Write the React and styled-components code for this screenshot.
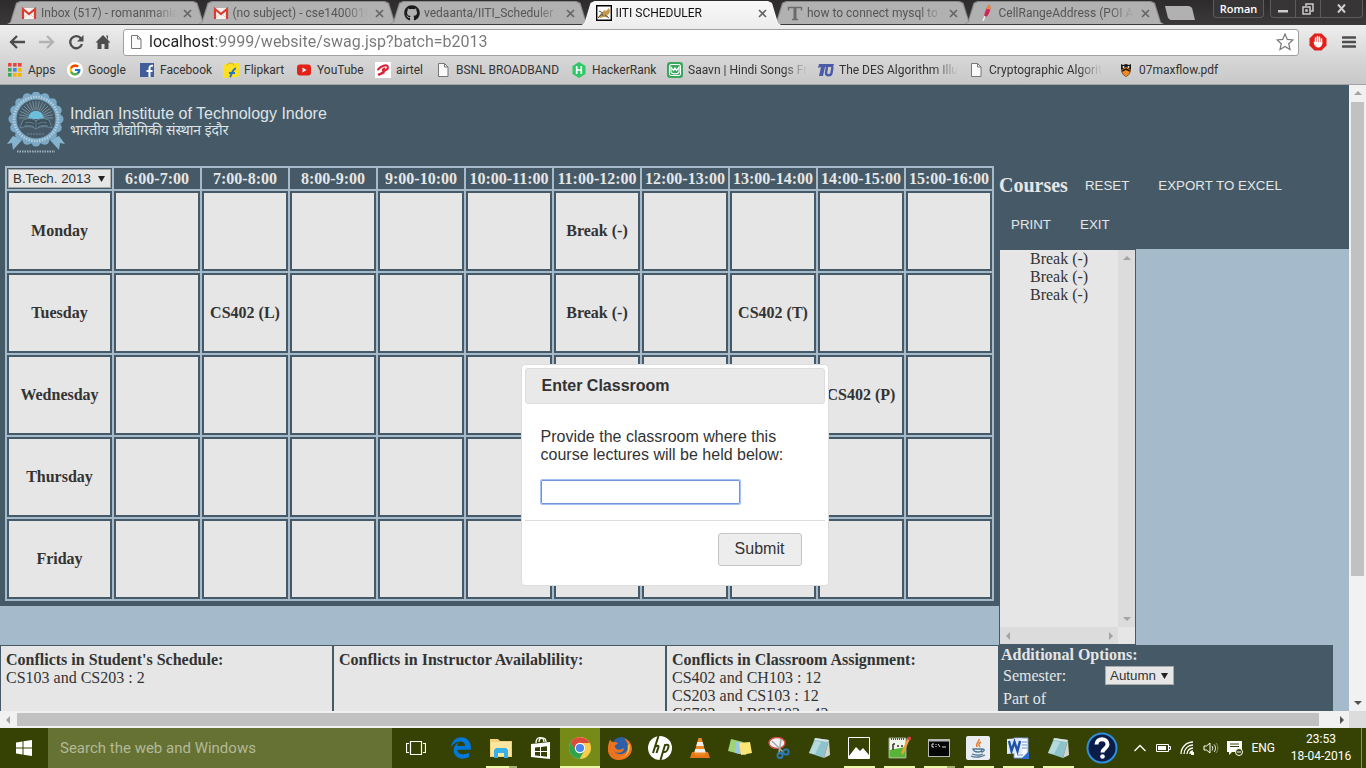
import React from "react";
import styled, { createGlobalStyle } from "styled-components";
import { FcGoogle } from "react-icons/fc";
import { FaGithub, FaEdgeLegacy } from "react-icons/fa6";

const DARK = "#455a66";
const LIGHT = "#a5bbcc";
const PAPER = "#e6e6e6";
const UI = 'Roboto, "Open Sans", sans-serif';
const SANS = '"Liberation Sans", Arial, sans-serif';
const SERIF = '"Liberation Serif", "Times New Roman", serif';

const GlobalStyle = createGlobalStyle`
  *, *::before, *::after { box-sizing: border-box; }
  body { margin: 0; overflow: hidden; }
  svg { display: block; flex: none; }
  button { cursor: pointer; }
`;

const Desktop = styled.div`
  display: flex;
  flex-direction: column;
  height: 100vh;
  overflow: hidden;
  font-family: ${UI};
`;

/* ---------- browser chrome ---------- */

const TabStrip = styled.div`
  display: flex;
  height: 25px;
  padding-left: 7px;
  background: linear-gradient(#2e2b2c, #3b3939);
`;

const TabList = styled.div`
  display: flex;
  flex: 0 1 1149px;
  min-width: 0;
`;

const Tab = styled.div`
  position: relative;
  z-index: ${(p) => (p.$active ? 2 : 1)};
  display: flex;
  align-items: center;
  gap: 4px;
  flex: 1 1 0;
  min-width: 0;
  margin-right: -8px;
  padding: 1px 12px 0 14px;
  &::before,
  &::after {
    content: "";
    position: absolute;
    z-index: -1;
    clip-path: polygon(0 100%, 3px 92%, 9px 8%, 13px 0, calc(100% - 13px) 0, calc(100% - 9px) 8%, calc(100% - 3px) 92%, 100% 100%);
  }
  &::before {
    inset: 1px 0 ${(p) => (p.$active ? 0 : 1)}px;
    background: ${(p) => (p.$active ? "#f8f8f8" : "#8a8a8a")};
  }
  &::after {
    inset: 2px 1px ${(p) => (p.$active ? 0 : 1)}px;
    background: ${(p) => (p.$active ? "linear-gradient(#f8f8f8, #eeeeee)" : "#b1b1b1")};
  }
`;

const TabLabel = styled.span`
  flex: 1;
  min-width: 0;
  white-space: nowrap;
  font-size: 12px;
  line-height: 20px;
  color: ${(p) => (p.$active ? "#111" : "#555")};
  mask-image: linear-gradient(to right, #000 calc(100% - 24px), transparent);
`;

const TabClose = styled.button`
  display: grid;
  place-items: center;
  width: 14px;
  height: 14px;
  padding: 0;
  border: 0;
  background: none;
  color: #666;
`;

const NewTab = styled.button`
  width: 30px;
  height: 14px;
  margin: 6px 0 0 9px;
  padding: 0;
  border: 0;
  background: #b1b1b1;
  clip-path: polygon(0 0, 80% 0, 90% 12%, 100% 100%, 18% 100%, 10% 85%);
`;

const WindowControls = styled.div`
  display: flex;
  height: 18px;
  margin-left: auto;
  margin-right: 3px;
`;

const WindowButton = styled.button`
  display: grid;
  place-items: center;
  width: ${(p) => p.$width}px;
  padding: 0;
  border: 1px solid #5d5b5c;
  border-width: 0 1px 1px ${(p) => (p.$first ? 1 : 0)}px;
  border-radius: ${(p) => (p.$first ? "0 0 0 4px" : p.$last ? "0 0 4px 0" : "0")};
  background: #373536;
  color: #ccc;
`;

const ProfileButton = styled(WindowButton)`
  margin-right: 6px;
  border-radius: 0 0 4px 4px;
  color: #fff;
  font: 600 11px/16px "Open Sans", sans-serif;
`;

const Toolbar = styled.div`
  display: flex;
  align-items: center;
  height: 34px;
  padding: 0 2px 0 8px;
  background: linear-gradient(#eeeeee, #d6d6d6);
`;

const ToolButton = styled.button`
  display: grid;
  place-items: center;
  width: ${(p) => p.$width || 29}px;
  height: 26px;
  padding: 0;
  border: 0;
  background: none;
  color: #4d4d4d;
`;

const Omnibox = styled.label`
  display: flex;
  align-items: center;
  gap: 5px;
  flex: 1;
  height: 27px;
  margin-right: 3px;
  padding: 0 4px;
  border: 1px solid #a0a0a0;
  border-radius: 3px;
  background: #fff;
`;

const UrlInput = styled.input`
  flex: 1;
  min-width: 0;
  padding: 0;
  border: 0;
  outline: 0;
  font: 16px/22px ${UI};
  color: transparent;
  background: linear-gradient(to right, #222 64px, #777 64px);
  -webkit-background-clip: text;
  background-clip: text;
`;

const BookmarkBar = styled.nav`
  display: flex;
  align-items: center;
  height: 26px;
  padding: 0 7px 3px;
  border-bottom: 1px solid #a3a3a3;
  background: linear-gradient(#d6d6d6, #c8c8c8);
`;

const Bookmark = styled.a`
  display: flex;
  align-items: center;
  gap: 5px;
  flex: 0 1 ${(p) => p.$width}px;
  min-width: 0;
  color: #333;
  font-size: 12px;
  line-height: 16px;
  text-decoration: none;
  white-space: nowrap;
`;

const BookmarkLabel = styled.span`
  mask-image: ${(p) => (p.$fade ? "linear-gradient(to right, #000 calc(100% - 24px), transparent)" : "none")};
`;

/* ---------- scrollbars ---------- */

const Scrollbar = styled.div`
  display: flex;
  flex-direction: ${(p) => (p.$vertical ? "column" : "row")};
  background: ${(p) => (p.$disabled ? "#dcdcdc" : "#f1f1f1")};
  ${(p) => (p.$vertical ? "width: 17px;" : "height: 17px;")}
`;

const ScrollArrow = styled.span`
  display: grid;
  place-items: center;
  flex: none;
  width: 17px;
  height: 17px;
  color: ${(p) => (p.$on ? "#505050" : "#a3a3a3")};
`;

const ScrollTrack = styled.div`
  flex: 1;
  padding: ${(p) => (p.$vertical ? "0 2px" : "2px 0")};
`;

const ScrollThumb = styled.div`
  width: ${(p) => (p.$vertical ? "100%" : "99%")};
  height: ${(p) => (p.$vertical ? "80%" : "100%")};
  background: #c1c1c1;
`;

/* ---------- scheduler page ---------- */

const ViewArea = styled.div`
  display: grid;
  grid-template: minmax(0, 1fr) 17px / minmax(0, 1fr) 17px;
  flex: 1;
  min-height: 0;
`;

const Corner = styled.div`
  background: #dcdcdc;
`;

const Page = styled.main`
  position: relative;
  display: grid;
  grid-template-columns: 999fr 334fr 16px;
  align-items: start;
  overflow: hidden;
  background: ${LIGHT};
  color: #333;
  font: 16px/18px ${SERIF};
`;

const ScheduleColumn = styled.div`
  min-width: 0;
`;

const SideColumn = styled.div`
  grid-column: 2 / 4;
  min-width: 0;
`;

const Banner = styled.header`
  display: flex;
  gap: 5px;
  height: 81px;
  padding: 7px;
  background: ${DARK};
`;

const BannerText = styled.div`
  padding-top: 13px;
  color: #dfe3e6;
  font-family: ${SANS};
  font-size: 16px;
  line-height: 18px;
  white-space: nowrap;
`;

const HindiName = styled.div`
  font-family: "Noto Sans Devanagari", "Noto Sans", "Lohit Devanagari", sans-serif;
  font-size: 14px;
  line-height: 18px;
`;

const TimetableWrap = styled.div`
  padding: 0 5px 5px;
  background: ${DARK};
`;

const Timetable = styled.table`
  width: 100%;
  table-layout: fixed;
  border-collapse: separate;
  border-spacing: 2px;
  background: ${LIGHT};
`;

const HourHeader = styled.th`
  width: ${(p) => p.$width || "auto"};
  height: 21px;
  padding: 0;
  background: ${DARK};
  color: ${PAPER};
  white-space: nowrap;
`;

const DayHeader = styled.th`
  height: 80px;
  padding: 0;
  border: 2px solid ${DARK};
  background: ${PAPER};
`;

const Slot = styled.td`
  padding: 0;
  border: 2px solid ${DARK};
  background: ${PAPER};
  font-weight: bold;
  text-align: center;
  white-space: nowrap;
`;

const SelectBox = styled.span`
  position: relative;
  display: block;
  width: ${(p) => p.$width};
  margin: ${(p) => (p.$center ? "0 auto" : 0)};
  svg {
    position: absolute;
    top: 7px;
    right: 6px;
    pointer-events: none;
  }
`;

const Select = styled.select`
  display: block;
  appearance: none;
  width: 100%;
  height: 19px;
  padding: 0 4px;
  border: 1px solid #a9a9a9;
  border-radius: 0;
  background: ${PAPER};
  color: #333;
  font-family: ${SANS};
`;

const Conflicts = styled.section`
  display: grid;
  grid-template-columns: repeat(3, 1fr);
  margin-top: 39px;
`;

const ConflictPanel = styled.div`
  min-height: 140px;
  padding: 5px;
  border: 1px solid ${DARK};
  background: ${PAPER};
`;

const PanelTitle = styled.h4`
  margin: 0;
  font-size: 16px;
  line-height: 18px;
`;

const ConflictLine = styled.div``;

const CourseBar = styled.div`
  display: flex;
  flex-wrap: wrap;
  align-items: center;
  gap: 3px 5px;
  padding: 82px 0 7px;
  background: ${DARK};
`;

const CourseTitle = styled.h3`
  margin: 0;
  color: ${PAPER};
  font-size: 20px;
  line-height: 22px;
`;

const FlatButton = styled.button`
  height: 36px;
  padding: 0 12px;
  border: 0;
  background: none;
  color: ${PAPER};
  font-family: ${SANS};
  text-transform: uppercase;
`;

const CourseBox = styled.div`
  display: grid;
  grid-template: minmax(0, 1fr) 17px / minmax(0, 1fr) 17px;
  width: 137px;
  height: 396px;
  border: 1px solid ${DARK};
  background: ${PAPER};
`;

const CourseList = styled.ul`
  margin: 0;
  padding: 0 0 0 30px;
  list-style: none;
`;

const Options = styled.section`
  margin-right: 16px;
  min-height: 120px;
  padding: 1px 2px;
  background: ${DARK};
  color: ${PAPER};
`;

const OptionRow = styled.div`
  display: grid;
  grid-template-columns: 102px 1fr;
  align-items: center;
  min-height: 23px;
  padding-left: 2px;
`;

/* ---------- dialog ---------- */

const Dialog = styled.form`
  position: absolute;
  top: 279px;
  left: 50%;
  width: 308px;
  height: 222px;
  padding: 3px;
  transform: translateX(-50%);
  border: 1px solid #ddd;
  border-radius: 4px;
  background: #fff;
  color: #333;
  font: 16px/18px ${SANS};
`;

const DialogTitle = styled.h2`
  margin: 0;
  padding: 8px 16px;
  border: 1px solid #ddd;
  border-radius: 3px;
  background: #e9e9e9;
  font-size: 16px;
  line-height: 18px;
`;

const DialogBody = styled.div`
  height: 116px;
  padding: 24px 16px 0;
`;

const DialogLabel = styled.label`
  display: block;
  margin-bottom: 16px;
`;

const DialogInput = styled.input`
  display: block;
  width: 199px;
  height: 24px;
  border: 1px solid #6f96d8;
  border-radius: 1px;
  outline: 1px solid #a3c3f7;
`;

const DialogFooter = styled.div`
  display: flex;
  justify-content: flex-end;
  padding: 12px 23px;
  border-top: 1px solid #ddd;
`;

const SubmitButton = styled.button`
  width: 84px;
  height: 33px;
  padding: 0 0 2px;
  border: 1px solid #c5c5c5;
  border-radius: 3px;
  background: #ededed;
  color: #333;
  font: 16px/18px ${SANS};
`;

/* ---------- taskbar ---------- */

const Taskbar = styled.footer`
  display: flex;
  height: 40px;
  background: #364203;
  color: #fff;
`;

const StartButton = styled.button`
  display: grid;
  place-items: center;
  width: 48px;
  padding: 0;
  border: 0;
  background: none;
`;

const SearchInput = styled.input`
  flex: 0 1 344px;
  min-width: 0;
  padding: 0 12px;
  border: 0;
  background: #667233;
  color: #fff;
  font: 15px/20px ${UI};
  &::placeholder {
    color: #b3b999;
    opacity: 1;
  }
`;

const AppRow = styled.div`
  display: flex;
  flex: 0 1 637px;
  margin-left: 1px;
`;

const AppButton = styled.button`
  display: grid;
  place-items: center;
  flex: 1;
  position: relative;
  padding: 0;
  border: 0;
  background: ${(p) => (p.$active ? "#768a18" : "none")};
  &::after {
    content: "";
    position: absolute;
    bottom: 0;
    left: ${(p) => (p.$active ? 0 : 5)}px;
    right: ${(p) => (p.$active ? 0 : 4)}px;
    height: 2px;
    background: ${(p) => (p.$stacked ? "linear-gradient(to right, #e9f8a6 74%, #a7b374 74%)" : "#e9f8a6")};
    opacity: ${(p) => (p.$running ? 1 : 0)};
  }
`;

const Tray = styled.div`
  display: flex;
  align-items: center;
  gap: 8px;
  margin-left: auto;
  font-size: 12px;
  line-height: 17px;
`;

const Clock = styled.time`
  width: 64px;
  margin-left: 6px;
  text-align: center;
  white-space: nowrap;
`;

const ShowDesktop = styled.button`
  width: 5px;
  height: 40px;
  padding: 0;
  border: 0;
  border-left: 1px solid #8a9168;
  background: none;
`;

/* ---------- drawings ---------- */

const Icon = ({ s = 16, h, box = 16, children }) => (
  <svg width={s} height={h || s} viewBox={`0 0 ${box} ${box}`} fill="none" aria-hidden="true">
    {children}
  </svg>
);

const Cross = () => (
  <Icon s={9} box={9}><path d="M1 1l7 7M8 1l-7 7" stroke="currentColor" strokeWidth="1.7" /></Icon>
);

const Gmail = () => (
  <Icon>
    <path d="M1 3h14v11H1z" fill="#f4f1ef" />
    <path d="M2 14V4l6 5 6-5v10" stroke="#d93e32" strokeWidth="2.200" />
    <path d="M4 12l3-3M12 12L9 9" stroke="#d8d0cc" />
  </Icon>
);

const CatFav = () => (
  <Icon>
    <path d="M.7.7h14.600v14.600H.7z" fill="#fff" stroke="#000" strokeWidth="1.400" />
    <path d="M2 12l3-4 2-1 1-2 2 1 3-3 1 3-1 3-2 1 2 3-3-1-3 0-2 1z" fill="#c49a4a" />
    <path d="M2 13l4-4 1 2M3 6l4 2M9 10l4 3" stroke="#555" />
  </Icon>
);

const LetterT = () => (
  <Icon>
    <path d="M1.500 5.500v-3h13v3M5 14.500h6" stroke="#6b6b6b" strokeWidth="1.400" />
    <path d="M8 2v12" stroke="#6b6b6b" strokeWidth="3" />
  </Icon>
);

const Feather = () => (
  <Icon>
    <path d="M10 0c2 1 1.500 4 .5 7C9.500 10 8 12 5 13c0-4 2-10 5-13z" fill="#cf2554" />
    <path d="M10 0c2 1 1.500 3 1 4.500L7.500 4C8 2.500 9 1 10 0z" fill="#f0862d" />
    <path d="M6 11l-2 5" stroke="#eee" strokeWidth="1.500" />
  </Icon>
);

const PageIcon = ({ h = 16 }) => (
  <Icon h={h}>
    <path d="M3.500 1.500h6l3.500 3.500v9.500H3.500z" fill="#fafafa" stroke="#777" />
    <path d="M9.500 1.500V5H13" stroke="#777" />
  </Icon>
);

const AppsGrid = () => (
  <Icon>
    {["#e8453c", "#e8453c", "#e8453c", "#3aa757", "#4285f4", "#f4b400", "#3aa757", "#f4b400", "#f4b400"].map((c, i) => (
      <rect key={i} x={1 + (i % 3) * 5} y={1 + Math.floor(i / 3) * 5} width="3.600" height="3.600" fill={c} />
    ))}
  </Icon>
);

const GoogleRound = () => (
  <Icon>
    <circle cx="8" cy="8" r="8" fill="#fff" />
    <FcGoogle x="1.500" y="1.500" size={13} />
  </Icon>
);

const Facebook = () => (
  <Icon>
    <rect x="1" y="1" width="14" height="14" fill="#415e9b" />
    <path d="M10.500 15V6.500c0-2 1-3 3.500-2.700M7.500 9h6" stroke="#fff" strokeWidth="2" />
  </Icon>
);

const Flipkart = () => (
  <Icon>
    <path d="M0 3l4-1 12-1v13l-2 1L0 16z" fill="#fde021" />
    <path d="M4 3c1-2.500 6-2.500 7 0" stroke="#cda80c" />
    <path d="M7 15c2-2 2-8 6-8.500M6 11h6" stroke="#2a74c8" strokeWidth="2" />
  </Icon>
);

const YouTube = () => (
  <Icon>
    <rect x="1" y="2.500" width="14" height="11" rx="3" fill="#e32119" />
    <path d="M6.500 5.500v5l4-2.500z" fill="#fff" />
  </Icon>
);

const Airtel = () => (
  <Icon>
    <rect width="16" height="16" fill="#fff" />
    <path d="M3 7.500C6 4 11.500 2 12.800 4.500c1 2.500-3 4.500-4.300 4.500C7 9 8 7 9.500 6.500" stroke="#dc1f33" strokeWidth="2" strokeLinecap="round" />
    <path d="M4 12.500c2-.3 2.500-1.500 4.500-2" stroke="#dc1f33" strokeWidth="2.500" strokeLinecap="round" />
  </Icon>
);

const HackerRank = () => (
  <Icon>
    <path d="M8 0l6.500 4v8L8 16l-6.500-4V4z" fill="#2ec866" />
    <path d="M5.700 4v8M10.300 4v8M5.700 8h4.600" stroke="#fff" strokeWidth="1.700" />
  </Icon>
);

const Saavn = () => (
  <Icon>
    <rect width="16" height="16" rx="3" fill="#3ba660" />
    <rect x="2.500" y="2.500" width="11" height="11" rx="1.500" stroke="#fff" />
    <path d="M4 5v5c1 2.500 7 2.500 8 0V5L9.500 8.500 8 6 6.500 8.500z" stroke="#fff" strokeWidth="1.200" />
  </Icon>
);

const DesIcon = () => (
  <Icon>
    <path d="M0 6l1-4h15l-1 3H7L5 14H1l2-9z" fill="#4b5ba8" />
    <path d="M9 5L8 11c0 3 5 3 5.500 0L14.500 5" stroke="#4b5ba8" strokeWidth="2.400" />
  </Icon>
);

const Shield = () => (
  <Icon>
    <path d="M3 2l2 1 3-1 3 1 2-1v5c0 4-2 6-5 8-3-2-5-4-5-8z" fill="#161616" />
    <path d="M3 8l5-3 5 3-2 4-3 3-3-3z" fill="#f08a20" />
    <path d="M4 9l4-2 4 2" stroke="#161616" strokeWidth="1.500" />
    <circle cx="5.500" cy="5" r="1" fill="#eee" /><circle cx="10.500" cy="5" r="1" fill="#eee" />
  </Icon>
);

const Triangle = ({ dir }) => {
  const d = { up: "M0 5l4-4 4 4z", down: "M0 2l4 4 4-4z", left: "M5 0L1 4l4 4z", right: "M3 0l4 4-4 4z" }[dir];
  return <Icon s={8} box={8}><path d={d} fill="currentColor" /></Icon>;
};

const SelectArrow = () => (
  <svg width="7" height="6" viewBox="0 0 7 6" aria-hidden="true"><path d="M0 0h7L3.500 6z" fill="#222" /></svg>
);

const teeth = Array.from({ length: 16 }, (_, i) => {
  const a = (i * Math.PI) / 8;
  return <circle key={i} cx={29 + 23 * Math.cos(a)} cy={27 + 23 * Math.sin(a)} r="4.500" fill="#7ba9c6" />;
});

const rays = Array.from({ length: 17 }, (_, i) => {
  const a = Math.PI + (i * Math.PI) / 16;
  return (
    <path
      key={i}
      d={`M${29 + 8 * Math.cos(a)} ${26 + 8 * Math.sin(a)}L${29 + 17 * Math.cos(a)} ${26 + 17 * Math.sin(a)}`}
      stroke="#8fa5b1"
      strokeWidth=".7"
    />
  );
});

const Crest = () => (
  <svg width="58" height="62" viewBox="0 0 58 62" fill="none" role="img" aria-label="Institute crest">
    <path d="M6 44L0 52l5-1 1 7 9-10zM52 44l6 8-5-1-1 7-9-10z" fill="#86b3ce" />
    {teeth}
    <circle cx="29" cy="27" r="25" fill="#7ba9c6" />
    <circle cx="29" cy="27" r="22" stroke="#b4cedd" strokeWidth="2.500" strokeDasharray="1.500 1.200" />
    <circle cx="29" cy="27" r="19.500" fill={DARK} />
    {rays}
    <path d="M21 27c1-11 15-11 16 0z" fill="#6cc0dc" />
    <path d="M16 28c5-2 10-2 13 1 3-3 8-3 13-1l3 8c-6-2-12-2-16 1-4-3-10-3-16-1z" fill="#3d505b" stroke="#7292a5" strokeWidth=".8" />
    <path d="M29 29v8M18 31c4-1 7-1 9 1M17 34c4-1 7-1 10 1M31 32c3-2 6-2 9-1M31 35c3-2 7-2 10-1" stroke="#7292a5" strokeWidth=".7" />
    <path d="M20 42h18" stroke="#6d8a9a" strokeDasharray="2 1" />
    <path d="M10 59.500h38" stroke="#9fb1bc" strokeWidth="2" strokeDasharray="1.500 1" />
  </svg>
);

const Chrome = () => (
  <Icon s={22} box={22}>
    <circle cx="11" cy="11" r="11" fill="#f7ce48" />
    <path d="M1.500 5.500A11 11 0 0 1 20.600 6H11L6 13z" fill="#dc4a3d" />
    <path d="M1.500 5.500A11 11 0 0 0 10.500 22l5-8.500H7z" fill="#30a350" />
    <circle cx="11" cy="11" r="5.200" fill="#fff" />
    <circle cx="11" cy="11" r="4.100" fill="#4a86ee" />
  </Icon>
);

const Explorer = () => (
  <Icon s={22} box={22}>
    <path d="M0 2h8l2 2h12v16H0z" fill="#f3d27a" />
    <path d="M1 5h20v14H1z" fill="#fbe6a0" />
    <path d="M4 21v-8l2-2h10l2 2v8h-4v-5H8v5z" fill="#35b0e8" />
  </Icon>
);

const Store = () => (
  <Icon s={24} box={24}>
    <path d="M2 8l19-2v17L2 21z" fill="#fff" />
    <path d="M7 7c0-7 8-7 8-1M10 6c0-6 7-5 7 0" stroke="#fff" strokeWidth="1.300" />
    <path d="M6 11.500l5-.5v4H6zM12 11l6-.7V15h-6zM6 16h5v4l-5-.5zM12 16h6v4.700l-6-.6z" fill="#364203" />
  </Icon>
);

const Firefox = () => (
  <Icon s={24} box={22}>
    <circle cx="12" cy="9.500" r="8.500" fill="#2c5fa5" />
    <path d="M2 3c0 2 2 2 3 3 2-1 4 0 4 1-1 1-4 1-2 4 2 3 6 1 8 0-1 5-7 6-10 2 3 5 11 5 13-1 1-4-1-7-3-10 5 2 7 6 7 10-1 12-20 14-22 2C-.5 9 1 5 2 3z" fill="#ea7320" />
    <path d="M20 7c1 9-4 13-10 13 6 0 9-5 8-11z" fill="#f9bd3c" />
  </Icon>
);

const Hp = () => (
  <Icon s={24} box={24}>
    <circle cx="12" cy="12" r="12" fill="#fff" />
    <path d="M10.500 0L5 17M7 10.500c3.500-1.500 4-.5 3.200 1.500L8.500 17M12.500 24l4.500-15c4-1 4 .5 3 3.500s-2 4-5 3.500" stroke="#364203" strokeWidth="2" />
  </Icon>
);

const Vlc = () => (
  <Icon s={22} box={22}>
    <path d="M3 15h16l2 6H1z" fill="#e77616" />
    <path d="M9.500 1h3L17 17c-2 2-10 2-12 0z" fill="#f08a24" />
    <path d="M8.300 5h5.400l1 4H7.300zM6.300 12h9.400l1 3.500H5.300z" fill="#eee" />
  </Icon>
);

const Notes = () => (
  <Icon s={24} box={24}>
    <path d="M3 3l12 3-3 12L0 15z" fill="#9ed477" />
    <path d="M8 6l11 1-1 12L7 17z" fill="#9cc6e6" />
    <path d="M11 7l11-1 2 11-11 2z" fill="#fbe574" />
  </Icon>
);

const Snip = () => (
  <Icon s={22} box={22}>
    <ellipse cx="9" cy="6" rx="8" ry="5.500" fill="#f2f2f2" stroke="#d14a46" strokeWidth="1.400" />
    <path d="M4 4l11 11M13 2l-2 14" stroke="#a6adb3" strokeWidth="1.600" />
    <circle cx="18" cy="15" r="2.700" stroke="#2e7cc0" strokeWidth="1.800" />
    <circle cx="12" cy="18.500" r="2.500" stroke="#2e7cc0" strokeWidth="1.800" />
  </Icon>
);

const Notepad = () => (
  <Icon s={22} box={22}>
    <path d="M7 1l14 2-5 18-15-5z" fill="#8fc3cc" />
    <path d="M7 1l14 2-1 2L6.500 3z" fill="#d8e4e4" />
    <path d="M21 3l1 15-6 3z" fill="#d6d6cf" />
    <path d="M7 4l6 1-6 12-6-1z" fill="#b6dade" />
  </Icon>
);

const Photos = () => (
  <Icon s={22} box={22}>
    <path d="M.5.5h21v21H.5z" stroke="#fff" />
    <path d="M1 19l7-9 4 4 3-3 6 7v3H1z" fill="#fff" />
  </Icon>
);

const NotepadPlus = () => (
  <Icon s={24} box={24}>
    <path d="M2 2h17v20H2z" fill="#f2f5ea" stroke="#96a187" />
    <path d="M2.500 14l16-3v10.500h-16z" fill="#58b434" />
    <path d="M4 3h14" stroke="#555" strokeWidth="2" strokeDasharray="1 1" />
    <path d="M6 14V8M6 8h2M10 10h2M14 10h2" stroke="#333" strokeWidth="1.500" />
    <path d="M22 2L15 18" stroke="#e7a33c" strokeWidth="2.500" />
    <path d="M23 1l-1 3" stroke="#d44" strokeWidth="3" />
  </Icon>
);

const Cmd = () => (
  <Icon s={22} box={22}>
    <path d="M0 2h22v18H0z" fill="#b7bab7" />
    <path d="M1 4.500h20V19H1z" fill="#050505" />
    <path d="M6 7H4v3h2M8 7v1M8 9v1M10 7l2 3M14 10h4" stroke="#ddd" />
  </Icon>
);

const Java = () => (
  <Icon s={24} box={24}>
    <rect width="24" height="24" rx="2" fill="#e9edf1" />
    <path d="M13 3c1 3-4 4-2 8M15 6c-2 1-3 3-1 5" stroke="#ea7b28" strokeWidth="1.500" />
    <path d="M7 13h9c0 4-8 4-9 0zM16 13c4 0 2 3-1 3M6 18c4 1.500 8 1.500 11 0M5 20c4 2 11 1 14-1" stroke="#4c7796" strokeWidth="1.300" />
  </Icon>
);

const Word = () => (
  <Icon s={22} box={22}>
    <path d="M7 1h14v20H7z" fill="#f5f8fd" stroke="#7d9bd3" />
    <path d="M15 5h5M15 8h5M15 11h5M10 18h6" stroke="#6f92d4" />
    <path d="M0 2l15-1v15L0 17z" fill="#dfe9f8" />
    <path d="M2 4l2.500 10L7.500 5l3 9L13 4" stroke="#1d52a5" strokeWidth="2.400" />
    <path d="M14 22l8-8v8z" fill="#2f6fd0" />
  </Icon>
);

const Help = () => (
  <Icon s={32} box={32}>
    <circle cx="16" cy="16" r="14.500" fill="#0b1c48" stroke="#2f8fd8" strokeWidth="2" />
    <path d="M10.500 12.500c0-7 11-7 11 0 0 4-5 4-5 8" stroke="#fff" strokeWidth="4" />
    <circle cx="16.500" cy="24.500" r="2.300" fill="#fff" />
  </Icon>
);

const Windows = () => (
  <Icon s={16} box={16}>
    <path d="M0 2.500l6.500-1v6H0zM7.500 1.300L16 0v7.500H7.500zM0 8.500h6.500v6L0 13.600zM7.500 8.500H16V16l-8.500-1.300z" fill="#fff" />
  </Icon>
);

const TaskView = () => (
  <Icon s={20} box={20}>
    <path d="M4.500 3.500h11v13h-11zM3 5.500H.5v9H3M17 5.500h2.500v9H17" stroke="#fff" strokeWidth="1.200" />
  </Icon>
);

/* ---------- data ---------- */

const TABS = [
  { label: "Inbox (517) - romanmania", icon: <Gmail /> },
  { label: "(no subject) - cse1400010", icon: <Gmail /> },
  { label: "vedaanta/IITI_Scheduler", icon: <FaGithub size={16} color="#1b1b1b" /> },
  { label: "IITI SCHEDULER", icon: <CatFav />, active: true },
  { label: "how to connect mysql to e", icon: <LetterT /> },
  { label: "CellRangeAddress (POI AP", icon: <Feather /> },
];

const BOOKMARKS = [
  ["Apps", 60, <AppsGrid />],
  ["Google", 72, <GoogleRound />],
  ["Facebook", 84, <Facebook />],
  ["Flipkart", 73, <Flipkart />],
  ["YouTube", 79, <YouTube />],
  ["airtel", 60, <Airtel />],
  ["BSNL BROADBAND", 136, <PageIcon />],
  ["HackerRank", 96, <HackerRank />],
  ["Saavn | Hindi Songs Fr", 151, <Saavn />, true],
  ["The DES Algorithm Illu", 150, <DesIcon />, true],
  ["Cryptographic Algorit", 150, <PageIcon />, true],
  ["07maxflow.pdf", 120, <Shield />],
];

const HOURS = [6, 7, 8, 9, 10, 11, 12, 13, 14, 15].map((h) => `${h}:00-${h + 1}:00`);

const DAYS = [
  ["Monday", { 5: "Break (-)" }],
  ["Tuesday", { 1: "CS402 (L)", 5: "Break (-)", 7: "CS402 (T)" }],
  ["Wednesday", { 8: "CS402 (P)" }],
  ["Thursday", {}],
  ["Friday", {}],
];

const CONFLICTS = [
  ["Conflicts in Student's Schedule:", ["CS103 and CS203 : 2"]],
  ["Conflicts in Instructor Availablility:", []],
  ["Conflicts in Classroom Assignment:", ["CS402 and CH103 : 12", "CS203 and CS103 : 12", "CS703 and BSE102 : 42"]],
];

const APPS = [
  ["Edge", <FaEdgeLegacy size={22} color="#0078d7" />],
  ["File Explorer", <Explorer />, "stacked"],
  ["Store", <Store />],
  ["Chrome", <Chrome />, "active"],
  ["Firefox", <Firefox />],
  ["HP", <Hp />],
  ["VLC", <Vlc />],
  ["Sticky Notes", <Notes />],
  ["Snipping Tool", <Snip />],
  ["Notepad", <Notepad />],
  ["Photos", <Photos />, "running"],
  ["Notepad++", <NotepadPlus />, "running"],
  ["Command Prompt", <Cmd />, "stacked"],
  ["Java", <Java />, "running"],
  ["Word", <Word />, "running"],
  ["Notepad document", <Notepad />, "running"],
];

/* ---------- sections ---------- */

const BrowserHeader = () => (
  <header>
    <TabStrip>
      <TabList>
        {TABS.map((t) => (
          <Tab key={t.label} $active={t.active}>
            {t.icon}
            <TabLabel $active={t.active}>{t.label}</TabLabel>
            <TabClose aria-label="Close tab"><Cross /></TabClose>
          </Tab>
        ))}
      </TabList>
      <NewTab aria-label="New tab" />
      <WindowControls>
        <ProfileButton $width={51} $first>Roman</ProfileButton>
        <WindowButton $width={26} $first aria-label="Minimize">
          <Icon s={12} box={12}><path d="M1 7h10v2.500H1z" fill="#ccc" /></Icon>
        </WindowButton>
        <WindowButton $width={25} aria-label="Restore">
          <Icon s={12} box={12}><path d="M4 3V1h7v7H9M1 4h7v7H1zM4 7h1v1H4z" stroke="#ccc" strokeWidth="1.500" /></Icon>
        </WindowButton>
        <WindowButton $width={42} $last aria-label="Close">
          <Icon s={11} box={11}><path d="M2 1.500l7 8M9 1.500l-7 8" stroke="#ccc" strokeWidth="2" /></Icon>
        </WindowButton>
      </WindowControls>
    </TabStrip>
    <Toolbar>
      <ToolButton $width={18} aria-label="Back">
        <Icon><path d="M16 8H3M8 2L2 8l6 6" stroke="currentColor" strokeWidth="2.300" /></Icon>
      </ToolButton>
      <ToolButton $width={42} aria-label="Forward">
        <Icon><path d="M0 8h13M8 2l6 6-6 6" stroke="#b3b3b3" strokeWidth="2.300" /></Icon>
      </ToolButton>
      <ToolButton $width={15} aria-label="Reload">
        <Icon><path d="M13 4.500A6 6 0 1 0 14 10" stroke="currentColor" strokeWidth="2.300" /><path d="M15.500 1v6.500H9z" fill="currentColor" /></Icon>
      </ToolButton>
      <ToolButton $width={40} aria-label="Home">
        <Icon><path d="M8 1l7.500 7.500h-2V15h-4v-5h-3v5h-4V8.500h-2zM11 1.500h2V6z" fill="currentColor" /></Icon>
      </ToolButton>
      <Omnibox>
        <PageIcon h={18} />
        <UrlInput aria-label="Address" defaultValue="localhost:9999/website/swag.jsp?batch=b2013" />
        <Icon s={18} box={18}>
          <path d="M9 1l2.300 5.400 5.700.5-4.300 3.800L14 16.500l-5-3-5 3 1.300-5.800L1 6.900l5.700-.5z" stroke="#777" strokeWidth="1.200" />
        </Icon>
      </Omnibox>
      <ToolButton $width={32} aria-label="Ad blocker">
        <Icon s={18} box={18}>
          <path d="M5.500.5h7l5 5v7l-5 5h-7l-5-5v-7z" fill="#e0201b" />
          <path d="M6.500 10V5M8.500 9V3.500M10.500 9V4M12.500 10V6M5.500 9.500c1 5 6 6 7.200.5z" stroke="#fff" strokeWidth="1.500" fill="#fff" strokeLinecap="round" />
        </Icon>
      </ToolButton>
      <ToolButton $width={30} aria-label="Menu">
        <Icon s={14} box={14}><path d="M1 2.500h12M1 7h12M1 11.500h12" stroke="currentColor" strokeWidth="2.600" strokeLinecap="round" /></Icon>
      </ToolButton>
    </Toolbar>
    <BookmarkBar aria-label="Bookmarks">
      {BOOKMARKS.map(([label, width, icon, fade]) => (
        <Bookmark key={label} href="#" $width={width}>
          {icon}
          <BookmarkLabel $fade={fade}>{label}</BookmarkLabel>
        </Bookmark>
      ))}
    </BookmarkBar>
  </header>
);

const ClassroomDialog = () => (
  <Dialog onSubmit={(e) => e.preventDefault()}>
    <DialogTitle>Enter Classroom</DialogTitle>
    <DialogBody>
      <DialogLabel htmlFor="classroom">Provide the classroom where this course lectures will be held below:</DialogLabel>
      <DialogInput id="classroom" type="text" />
    </DialogBody>
    <DialogFooter>
      <SubmitButton type="submit">Submit</SubmitButton>
    </DialogFooter>
  </Dialog>
);

const Scheduler = () => (
  <Page>
    <ScheduleColumn>
      <Banner>
        <Crest />
        <BannerText>
          Indian Institute of Technology Indore
          <HindiName lang="hi">भारतीय प्रौद्योगिकी संस्थान इंदौर</HindiName>
        </BannerText>
      </Banner>
      <TimetableWrap>
        <Timetable>
          <thead>
            <tr>
              <HourHeader $width="105px">
                <SelectBox $width="103px" $center>
                  <Select aria-label="Batch"><option>B.Tech. 2013</option></Select>
                  <SelectArrow />
                </SelectBox>
              </HourHeader>
              {HOURS.map((h) => <HourHeader key={h}>{h}</HourHeader>)}
            </tr>
          </thead>
          <tbody>
            {DAYS.map(([day, slots]) => (
              <tr key={day}>
                <DayHeader>{day}</DayHeader>
                {HOURS.map((h, i) => <Slot key={h}>{slots[i]}</Slot>)}
              </tr>
            ))}
          </tbody>
        </Timetable>
      </TimetableWrap>
      <Conflicts>
        {CONFLICTS.map(([title, lines]) => (
          <ConflictPanel key={title}>
            <PanelTitle>{title}</PanelTitle>
            {lines.map((l) => <ConflictLine key={l}>{l}</ConflictLine>)}
          </ConflictPanel>
        ))}
      </Conflicts>
    </ScheduleColumn>
    <SideColumn>
      <CourseBar>
        <CourseTitle>Courses</CourseTitle>
        <FlatButton>Reset</FlatButton>
        <FlatButton>Export to Excel</FlatButton>
        <FlatButton>Print</FlatButton>
        <FlatButton>Exit</FlatButton>
      </CourseBar>
      <CourseBox>
        <CourseList>
          <li>Break (-)</li>
          <li>Break (-)</li>
          <li>Break (-)</li>
        </CourseList>
        <Scrollbar $vertical $disabled>
          <ScrollArrow><Triangle dir="up" /></ScrollArrow>
          <ScrollTrack $vertical />
          <ScrollArrow><Triangle dir="down" /></ScrollArrow>
        </Scrollbar>
        <Scrollbar $disabled>
          <ScrollArrow><Triangle dir="left" /></ScrollArrow>
          <ScrollTrack />
          <ScrollArrow><Triangle dir="right" /></ScrollArrow>
        </Scrollbar>
      </CourseBox>
      <Options>
        <PanelTitle>Additional Options:</PanelTitle>
        <OptionRow>
          <label htmlFor="semester">Semester:</label>
          <SelectBox $width="69px">
            <Select id="semester"><option>Autumn</option></Select>
            <SelectArrow />
          </SelectBox>
        </OptionRow>
        <OptionRow>Part of</OptionRow>
      </Options>
    </SideColumn>
    <ClassroomDialog />
  </Page>
);

const WindowsTaskbar = () => (
  <Taskbar>
    <StartButton aria-label="Start"><Windows /></StartButton>
    <SearchInput type="text" aria-label="Search" placeholder="Search the web and Windows" />
    <StartButton aria-label="Task view"><TaskView /></StartButton>
    <AppRow>
      {APPS.map(([name, icon, state]) => (
        <AppButton key={name} aria-label={name} $active={state === "active"} $running={!!state} $stacked={state === "stacked"}>
          {icon}
        </AppButton>
      ))}
    </AppRow>
    <StartButton aria-label="Help"><Help /></StartButton>
    <Tray>
      <Icon s={14} box={14}><path d="M1.500 10L7 4.500l5.500 5.500" stroke="#fff" strokeWidth="1.300" /></Icon>
      <Icon><path d="M1.500 4.500h12v7h-12zM14 6.500h1.500v3H14" stroke="#fff" /><path d="M3 6h8v4H3z" fill="#fff" /></Icon>
      <Icon>
        <path d="M2 14A12 12 0 0 1 14 2M5 14a9 9 0 0 1 9-9M8 14a6 6 0 0 1 6-6M11 14a3 3 0 0 1 3-3" stroke="#fff" strokeWidth="1.300" />
        <path d="M12 12h3v3h-3z" fill="#fff" />
      </Icon>
      <Icon>
        <path d="M1 6h2.500L7 3v10l-3.500-3H1z" stroke="#fff" />
        <path d="M9 6c1 1.500 1 3 0 4.500M11 4.500c2 2 2 5.500 0 7.500" stroke="#fff" />
        <path d="M13 3c2.500 3 2.500 7 0 10" stroke="#8b916b" />
      </Icon>
      <Icon>
        <path d="M0 1h15v9h-5v2H5l-3 3v-3H0z" fill="#fff" />
        <path d="M3 4h9M3 6.500h9" stroke="#364203" />
        <circle cx="12" cy="12" r="3.500" fill="#364203" stroke="#fff" />
        <path d="M10 12h4" stroke="#fff" />
      </Icon>
      <span>ENG</span>
      <Clock>23:53<br />18-04-2016</Clock>
      <ShowDesktop aria-label="Show desktop" />
    </Tray>
  </Taskbar>
);

export default function App() {
  return (
    <Desktop>
      <GlobalStyle />
      <BrowserHeader />
      <ViewArea>
        <Scheduler />
        <Scrollbar $vertical>
          <ScrollArrow><Triangle dir="up" /></ScrollArrow>
          <ScrollTrack $vertical><ScrollThumb $vertical /></ScrollTrack>
          <ScrollArrow $on><Triangle dir="down" /></ScrollArrow>
        </Scrollbar>
        <Scrollbar>
          <ScrollArrow><Triangle dir="left" /></ScrollArrow>
          <ScrollTrack><ScrollThumb /></ScrollTrack>
          <ScrollArrow $on><Triangle dir="right" /></ScrollArrow>
        </Scrollbar>
        <Corner />
      </ViewArea>
      <WindowsTaskbar />
    </Desktop>
  );
}
